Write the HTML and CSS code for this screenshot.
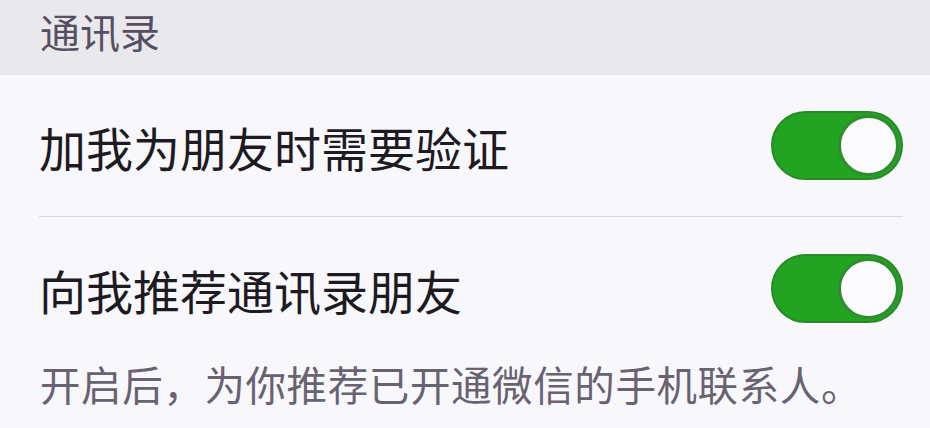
FILE: index.html
```html
<!DOCTYPE html>
<html lang="zh-CN">
<head>
<meta charset="utf-8">
<link rel="stylesheet" href="styles.css">
</head>
<body>
<div class="page">
  <div class="section-header">通讯录</div>
  <div class="group">
    <div class="row with-sep">
      <span class="label">加我为朋友时需要验证</span>
      <span class="switch on"><span class="knob"></span></span>
    </div>
    <div class="row">
      <span class="label">向我推荐通讯录朋友</span>
      <span class="switch on"><span class="knob"></span></span>
    </div>
  </div>
  <div class="footer-note">开启后，为你推荐已开通微信的手机联系人。</div>
</div>
</body>
</html>
```
FILE: styles.css
```css
html, body {
  margin: 0;
  padding: 0;
}
body {
  width: 930px;
  height: 428px;
  overflow: hidden;
  background: #f8f8fc;
  font-family: "Noto Sans CJK SC", "Noto Sans", sans-serif;
}
.page {
  display: flex;
  flex-direction: column;
}
.section-header {
  height: 75px;
  box-sizing: border-box;
  padding: 11px 0 0 40px;
  font-size: 40px;
  line-height: 40px;
  color: #564f62;
  background: #e9e8ed;
}
.group {
  display: flex;
  flex-direction: column;
  padding-left: 39px;
  padding-right: 27px;
}
.row {
  height: 142px;
  display: flex;
  align-items: center;
  justify-content: space-between;
  box-sizing: border-box;
}
.row.with-sep {
  border-bottom: 1px solid #d9d9de;
}
.label {
  font-size: 47px;
  line-height: 47px;
  color: #1d1a22;
  margin-top: 2px;
}
.switch {
  width: 132px;
  height: 69px;
  border-radius: 35px;
  box-sizing: border-box;
  background: #22a322;
  border: 2px solid #2a8a2a;
  display: flex;
  align-items: center;
  justify-content: flex-end;
  padding-right: 2px;
}
.knob {
  width: 61px;
  height: 61px;
  border-radius: 50%;
  box-sizing: border-box;
  background: #fbfbfd;
  border: 3px solid #2f8c2f;
}
.footer-note {
  padding: 1px 0 0 40px;
  font-size: 40.5px;
  letter-spacing: 0.6px;
  line-height: 48px;
  color: #686271;
}
```
